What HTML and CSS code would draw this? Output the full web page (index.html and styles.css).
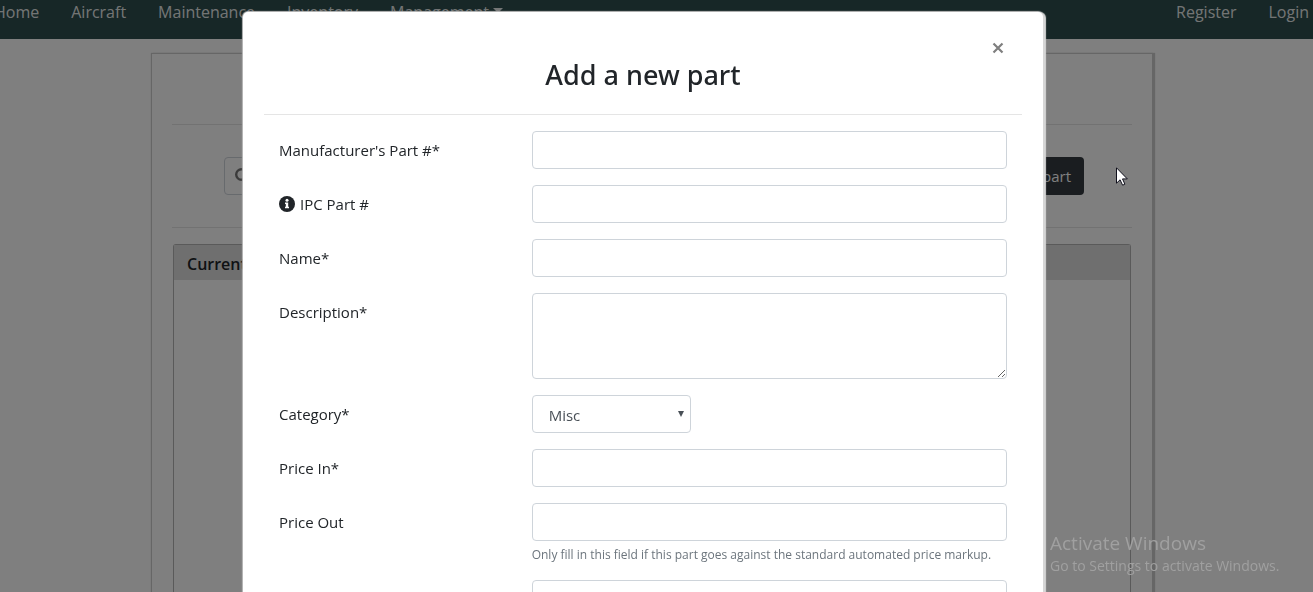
FILE: index.html
```html
<!DOCTYPE html>
<html lang="en">
<head>
<meta charset="utf-8">
<title>Inventory</title>
<meta name="viewport" content="width=device-width, initial-scale=1">
<link rel="stylesheet" href="styles.css">
</head>
<body>
<nav class="navbar">
  <div class="nav-group">
    <a class="nav-link" href="#">Home</a>
    <a class="nav-link" href="#">Aircraft</a>
    <a class="nav-link" href="#">Maintenance</a>
    <a class="nav-link" href="#">Inventory</a>
    <a class="nav-link has-caret" href="#">Management</a>
  </div>
  <div class="nav-group">
    <a class="nav-link" href="#">Register</a>
    <a class="nav-link" href="#">Login</a>
  </div>
</nav>
<div class="page">
<main class="panel">
  <section class="toolbar">
    <div class="search">
      <svg class="search-icon" viewBox="0 0 16 16" aria-hidden="true"><circle cx="6.500" cy="6.500" r="5.300" fill="none" stroke="currentColor" stroke-width="2.400"/><path d="M10.500 10.500 15 15" stroke="currentColor" stroke-width="2.600"/></svg>
      <input class="search-input" type="search" aria-label="Search parts">
    </div>
    <button class="btn-dark" type="button">Add part</button>
  </section>
  <section class="card">
    <h2 class="card-header">Current</h2>
  </section>
</main>
</div>

<div class="overlay">
  <div class="modal" role="dialog" aria-modal="true" aria-labelledby="title">
    <header class="modal-header">
      <button class="close" type="button" aria-label="Close"><svg viewBox="0 0 12 12"><path d="M1.500 1.500 10.500 10.500M10.500 1.500 1.500 10.500" stroke="currentColor" stroke-width="2.200" fill="none"/></svg></button>
      <h1 class="modal-title" id="title">Add a new part</h1>
    </header>
    <form class="form">
      <div class="row"><label class="label" for="mpn">Manufacturer's Part #*</label><div class="field"><input class="control" id="mpn" type="text"></div></div>
      <div class="row"><label class="label" for="ipc"><svg class="info" viewBox="0 0 16 16" aria-hidden="true"><circle cx="8" cy="8" r="8" fill="currentColor"/><circle cx="8" cy="4.300" r="1.500" fill="#fff"/><path d="M6 6.500h3.200v4.300H10v1.500H6v-1.500h.8V8H6z" fill="#fff"/></svg>IPC Part #</label><div class="field"><input class="control" id="ipc" type="text"></div></div>
      <div class="row"><label class="label" for="name">Name*</label><div class="field"><input class="control" id="name" type="text"></div></div>
      <div class="row"><label class="label" for="desc">Description*</label><div class="field"><textarea class="control area" id="desc"></textarea></div></div>
      <div class="row"><label class="label" for="cat">Category*</label><div class="field"><div class="select-wrap"><select class="control select" id="cat"><option>Misc</option></select></div></div></div>
      <div class="row"><label class="label" for="pin">Price In*</label><div class="field"><input class="control" id="pin" type="text"></div></div>
      <div class="row"><label class="label" for="pout">Price Out</label><div class="field"><input class="control" id="pout" type="text" aria-describedby="hint"><small class="hint" id="hint">Only fill in this field if this part goes against the standard automated price markup.</small></div></div>
      <div class="row"><span class="label"></span><div class="field"><input class="control" type="text" aria-label="Additional value"></div></div>
    </form>
  </div>
</div>

<aside class="watermark">
  <p class="watermark-title">Activate Windows</p>
  <p class="watermark-text">Go to Settings to activate Windows.</p>
</aside>
<svg class="cursor" viewBox="0 0 12 19" aria-hidden="true"><path d="M.5.8v15.400l3.600-3.400 2.500 5.400 2.300-1-2.400-5.300h4.800z" fill="#fff" stroke="#10101c"/></svg>
</body>
</html>
```
FILE: styles.css
```css
* { box-sizing: border-box; }

body {
  margin: 0;
  height: 100vh;
  overflow: hidden;
  display: flex;
  flex-direction: column;
  background: #fff;
  color: #212529;
  font: 400 15px/24px "Open Sans", "Noto Sans", sans-serif;
}

h1, h2, p { margin: 0; }

.navbar {
  display: flex;
  justify-content: space-between;
  height: 39px;
  margin-left: -6px;
  padding-right: 4px;
  background: darkslategray;
}

.nav-group { display: flex; gap: 32px; }

.nav-link {
  color: rgba(255, 255, 255, .9);
  text-decoration: none;
  font-size: 16px;
}

.has-caret::after {
  content: "";
  display: inline-block;
  margin-left: 4px;
  vertical-align: 5px;
  border-top: 5px solid;
  border-left: 5px solid transparent;
  border-right: 5px solid transparent;
}

.page {
  flex: 1;
  display: flex;
  padding: 15px 9px 0 0;
}

.panel {
  display: flex;
  flex-direction: column;
  width: 1000px;
  max-width: 100%;
  margin: 0 auto;
  padding: 70px 20px 0;
  box-shadow: 2px 0 1px 1px #ccc, 0 0 1px 1px #ccc;
}

.toolbar {
  display: flex;
  justify-content: space-between;
  padding: 32px 48px 32px 52px;
  border-top: 1px solid #e5e5e5;
  border-bottom: 1px solid #e5e5e5;
}

.search {
  display: flex;
  align-items: center;
  width: 300px;
  height: 38px;
  padding: 0 10px;
  border: 1px solid #ced4da;
  border-radius: 4px;
}

.search-icon { width: 16px; height: 16px; color: #777; }

.search-input { flex: 1; border: 0; background: none; }

.btn-dark {
  height: 38px;
  padding: 0 13px;
  border: 0;
  border-radius: 4px;
  background: #343a40;
  color: #fff;
  font: inherit;
}

.card {
  flex: 1;
  margin: 16px 1px 0;
  border: 1px solid #b5b5b5;
  border-bottom: 0;
  border-radius: 3px 3px 0 0;
}

.card-header {
  height: 35px;
  padding: 7px 13px;
  background: #dfdfdf;
  font-size: 16px;
  font-weight: 600;
}

.overlay {
  position: fixed;
  inset: 0;
  overflow: hidden;
  padding: 12px 27px 0 0;
  background: rgba(0, 0, 0, .5);
}

.modal {
  width: 800px;
  max-width: 100%;
  min-height: 100%;
  margin: 0 auto;
  padding: 20px 21px;
  border-radius: 5px;
  background: #fff;
  box-shadow: 2px 1px 1px 1px #d6d6d6, 0 0 1px 1px #bbb;
}

.modal-header {
  display: flex;
  flex-direction: column;
  height: 83px;
  border-bottom: 1px solid #e5e5e5;
  text-align: center;
}

.close {
  align-self: flex-end;
  display: flex;
  margin-right: 12px;
  padding: 10px 6px 0;
  border: 0;
  background: none;
  color: #7f7f7f;
}

.close svg { width: 12px; height: 12px; }

.modal-title {
  font-family: "Noto Sans", "Open Sans", sans-serif;
  font-size: 27px;
  line-height: 42px;
  font-weight: 500;
}

.form { display: grid; gap: 16px; padding-top: 16px; }

.row { display: grid; grid-template-columns: 1fr 2fr; }

.label { display: flex; gap: 5px; padding: 7px 15px; }

.info { width: 16px; height: 16px; margin-top: 4px; }

.field { padding: 0 15px; }

.control {
  display: block;
  width: 100%;
  height: 38px;
  padding: 6px 12px;
  border: 1px solid #ced4da;
  border-radius: 4px;
  background: #fff;
  color: #495057;
  font: inherit;
}

.area { height: 86px; }

.select-wrap { position: relative; width: 159px; }

.select { padding: 7px 16px 5px; appearance: none; }

.select-wrap::after {
  content: "";
  position: absolute;
  top: 16px;
  right: 7px;
  border-top: 6px solid #495057;
  border-left: 3px solid transparent;
  border-right: 3px solid transparent;
}

.hint {
  display: block;
  margin-top: 5px;
  color: #6c757d;
  font-size: 12px;
  line-height: 18px;
}

.watermark {
  position: fixed;
  right: 26px;
  bottom: 15px;
  width: 237px;
  color: #a0a0a0;
  white-space: nowrap;
}

.watermark-title { font-size: 19px; line-height: 24px; }

.watermark-text { font-size: 14px; line-height: 22px; }

.cursor { position: fixed; left: 1116px; top: 167px; width: 12px; height: 19px; }
```
